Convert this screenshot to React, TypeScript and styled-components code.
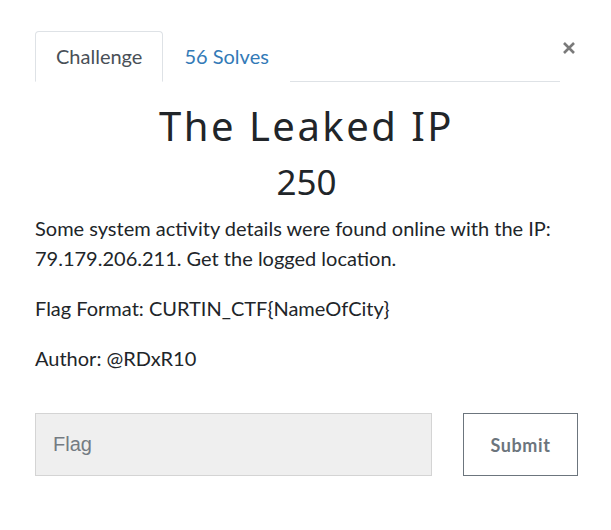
import React from "react";
import styled, { createGlobalStyle } from "styled-components";

const Global = createGlobalStyle`
  html, body { margin: 0; padding: 0; background: #fff; }
  body { font-family: Lato, "Liberation Sans", sans-serif; color: #212529; }
  * { box-sizing: border-box; }
`;

const Page = styled.div`
  width: 611px;
  padding: 31px 33px 0 35px;
`;

const Header = styled.div`
  display: flex;
  align-items: flex-start;
`;

const Tabs = styled.ul`
  flex: 1;
  display: flex;
  margin: 0;
  padding: 0;
  list-style: none;
  border-bottom: 1px solid #dee2e6;
`;

const Tab = styled.li<{ $active?: boolean }>`
  margin-bottom: -1px;
  padding: 10px 20px;
  font-size: 20px;
  line-height: 29px;
  border: 1px solid ${(p) => (p.$active ? "#dee2e6" : "transparent")};
  border-bottom-color: ${(p) => (p.$active ? "#fff" : "transparent")};
  border-radius: 4px 4px 0 0;
  background: #fff;
  color: ${(p) => (p.$active ? "#495057" : "#337ab7")};
`;

const Close = styled.button`
  width: 18px;
  height: 18px;
  margin-top: 8px;
  padding: 0;
  border: 0;
  background: none;
  display: flex;
  align-items: center;
  justify-content: center;
`;

const Title = styled.h1`
  margin: 21px 0 0;
  text-align: center;
  font-family: "Noto Sans", sans-serif;
  font-weight: 400;
  font-size: 40px;
  line-height: 46px;
  letter-spacing: 2.5px;
  color: #212529;
`;

const Value = styled.h2`
  margin: 13px 0 0;
  text-align: center;
  font-family: "Noto Sans", sans-serif;
  font-weight: 400;
  font-size: 35px;
  line-height: 40px;
  color: #212529;
`;

const Description = styled.div`
  margin-top: 11px;
`;

const Para = styled.p`
  margin: 0 0 20px;
  font-size: 20px;
  line-height: 30px;
  color: #212529;
`;

const FlagRow = styled.form`
  display: flex;
  gap: 31px;
  margin-top: 40px;
`;

const FlagInput = styled.input`
  width: 397px;
  height: 63px;
  padding: 0 17px;
  border: 1px solid #d4d4d4;
  background: #efefef;
  font-family: "Liberation Sans", Arial, sans-serif;
  font-size: 20px;
  color: #495057;
  outline: none;
  &::placeholder { color: #747b82; }
`;

const SubmitButton = styled.button`
  width: 115px;
  height: 63px;
  border: 1px solid #6c757d;
  background: #fff;
  font-family: Lato, sans-serif;
  font-weight: 700;
  font-size: 18px;
  letter-spacing: 0.6px;
  color: #6c757d;
`;

export default function App() {
  return (
    <>
      <Global />
      <Page>
        <Header>
          <Tabs>
            <Tab $active>Challenge</Tab>
            <Tab>56 Solves</Tab>
          </Tabs>
          <Close aria-label="Close">
            <svg width="14" height="14" viewBox="0 0 14 14">
              <path d="M2 2 L12 12 M12 2 L2 12" stroke="#7a7a7a" strokeWidth="2.6" strokeLinecap="butt" />
            </svg>
          </Close>
        </Header>
        <Title>The Leaked IP</Title>
        <Value>250</Value>
        <Description>
          <Para>
            Some system activity details were found online with the IP: 79.179.206.211. Get the logged location.
          </Para>
          <Para>Flag Format: CURTIN_CTF{"{"}NameOfCity{"}"}</Para>
          <Para>Author: @RDxR10</Para>
        </Description>
        <FlagRow onSubmit={(e) => e.preventDefault()}>
          <FlagInput placeholder="Flag" />
          <SubmitButton type="submit">Submit</SubmitButton>
        </FlagRow>
      </Page>
    </>
  );
}
